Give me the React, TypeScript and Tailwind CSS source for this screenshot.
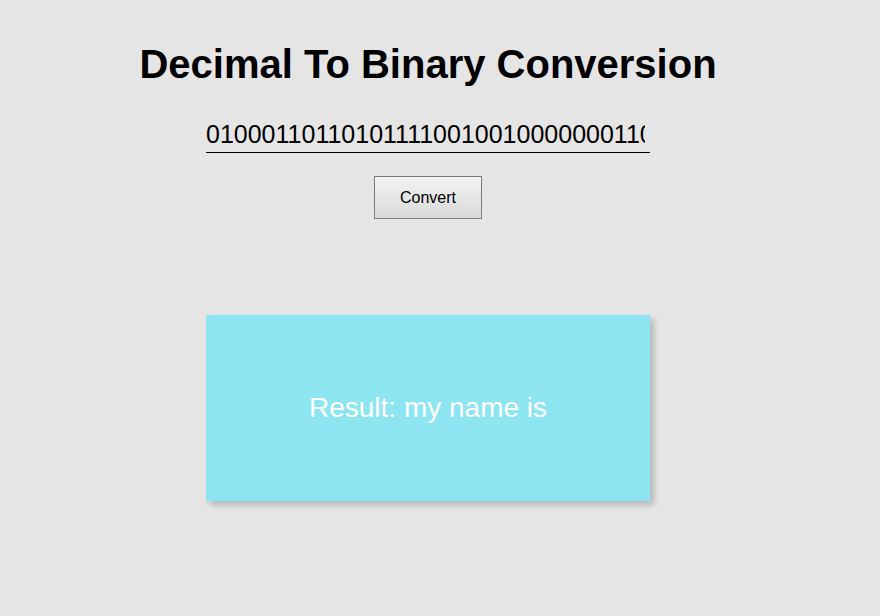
import React, { useState } from "react";

export default function App() {
  const [value, setValue] = useState("0100011011010111100100100000001101101110");

  return (
    <div className="min-h-[616px] bg-[#e5e5e5] font-['Liberation_Sans',Arial,sans-serif] text-black">
      <div className="w-[856px] flex flex-col items-center pt-[41px]">
        <h1 className="text-[40px] font-bold leading-[46px]">Decimal To Binary Conversion</h1>

        {/* Input */}
        <input
          type="text"
          value={value}
          onChange={(e) => setValue(e.target.value)}
          className="mt-[33px] w-[444px] h-[33px] bg-transparent border-b border-black font-['Liberation_Sans',Arial,sans-serif] text-[25px] leading-[29px] pr-[5px] pb-[3px] outline-none"
        />

        <button className="mt-[23px] w-[108px] h-[43px] border border-[#7a7a7a] bg-gradient-to-b from-[#f2f2f2] to-[#dadada] text-[16px]">
          Convert
        </button>

        {/* Result card */}
        <div className="mt-[96px] w-[444px] h-[186px] bg-[#8ee5f2] shadow-[4px_4px_6px_rgba(0,0,0,0.2)] flex items-center justify-center">
          <span className="text-white text-[28px]">Result: my name is</span>
        </div>
      </div>
    </div>
  );
}
